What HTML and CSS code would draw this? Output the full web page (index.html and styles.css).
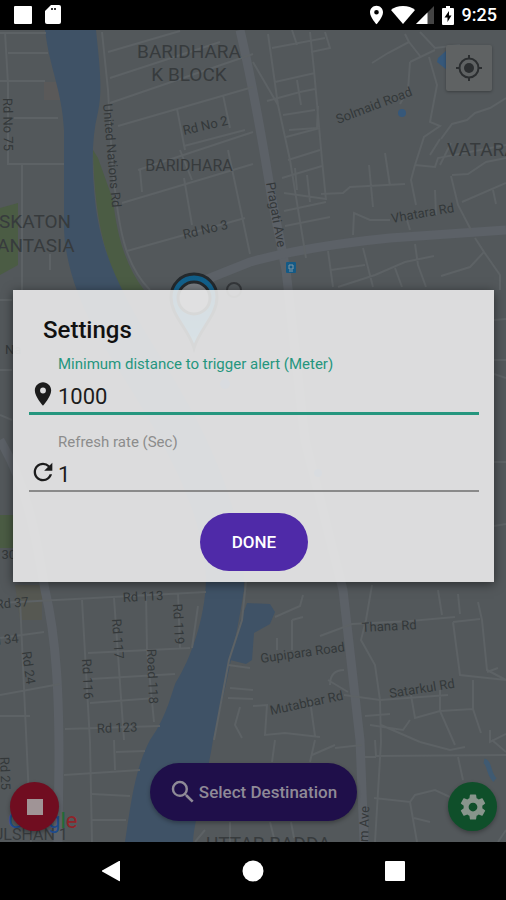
FILE: index.html
```html
<!DOCTYPE html>
<html lang="en">
<head>
    <meta charset="UTF-8">
    <meta name="viewport" content="width=device-width, initial-scale=1.0">
    <title>Location Alarm - Settings</title>
    <link rel="stylesheet" href="styles.css">
</head>
<body>

    <header class="status-bar">
        <div class="status-group">
            <svg width="18" height="18" viewBox="0 0 18 18"><rect width="18" height="18" rx="1"/></svg>
            <svg width="16" height="20" viewBox="0 0 16 20"><path d="M6 0h8a2 2 0 0 1 2 2v15a2 2 0 0 1-2 2H2a2 2 0 0 1-2-2V6z"/><path d="M6 3h2v2H6zM9 3h2v2H9z" fill="#333"/></svg>
        </div>
        <div class="status-group status-right">
            <svg width="13" height="20" viewBox="0 0 14 20"><path d="M7 0C3.1 0 0 3.1 0 7c0 5.3 7 13 7 13s7-7.700 7-13c0-3.900-3.100-7-7-7zm0 9.500a2.500 2.500 0 1 1 0-5 2.500 2.500 0 0 1 0 5z"/></svg>
            <svg class="wifi" width="24" height="18" viewBox="0 0 24 18"><path d="M12 18L0 4C3 1.500 7 0 12 0s9 1.500 12 4z"/></svg>
            <svg width="18" height="18" viewBox="0 0 18 18"><path d="M18 0v18H0z" fill="#444"/><path d="M11.500 6.500V18H0z"/></svg>
            <svg class="battery" width="12" height="19" viewBox="0 0 12 19"><path d="M4 0h4v2h3a1 1 0 0 1 1 1v15a1 1 0 0 1-1 1H1a1 1 0 0 1-1-1V3a1 1 0 0 1 1-1h3z"/><path d="M7 5L2.500 11.500H5.500V16L9.500 9.500H7z" fill="#000"/></svg>
            <span class="clock">9:25</span>
        </div>
    </header>

    <main class="screen">
        <svg class="map" viewBox="0 30 506 812" preserveAspectRatio="xMidYMid slice" aria-hidden="true">
            <defs>
                <linearGradient id="pinFill" x1="0" y1="0" x2="0" y2="1">
                    <stop offset="0" stop-color="#0f5c86"/>
                    <stop offset="1" stop-color="#2c86b4"/>
                </linearGradient>
            </defs>
            <rect y="30" width="506" height="812" fill="#53585b"/>

            <!-- parks -->
            <path d="M0 208L18 203V265L0 275z" fill="#4b5c44"/>
            <path d="M93 150C94 200 100 250 122 290H144C125 265 117 235 113 200L98 158z" fill="#4b5c44"/>
            <path d="M0 515H14V548H0z" fill="#4b5c44"/>
            <path d="M44 82H60V100H44z" fill="#5a5959"/>
            <path d="M15 585H42V620H20z" fill="#565852"/>

            <!-- water -->
            <path d="M45 30H96C99 60 103 90 98 112C91 140 92 170 95 200C100 250 120 290 150 340C200 420 245 500 244 590C236 640 223 700 213 740C205 790 194 820 193 842H125C130 810 134 770 150 740C168 715 172 690 176 682C190 660 205 620 206 580C204 500 150 420 100 340C72 290 63 250 64 220V130C62 90 50 70 45 30z" fill="#3f5266"/>
            <path d="M247 603L270 604L275 612L270 624L254 633L252 660L246 664L230 660L240 622z" fill="#3f5266"/>
            <path d="M438 58L447 50V70L437 62z" fill="#36587a"/>
            <circle cx="402" cy="113" r="4" fill="#36587a"/>
            <path d="M484 761C490 762 488 774 495 780" fill="none" stroke="#3f5a72" stroke-width="5"/>

            <!-- main roads -->
            <g fill="none" stroke="#5c6167" stroke-width="9">
                <path d="M240 30C254 90 264 150 272 200L286 270L305 440L343 590L360 740L364 842"/>
                <path d="M200 282L250 262C290 251 340 243 390 238L506 230"/>
                <path d="M0 440C30 490 38 550 45 590C57 640 59 700 59 760L58 842"/>
            </g>

            <!-- streets -->
            <g fill="none" stroke="#5d6265" stroke-width="2">
                <path d="M5 32L8 84V164H64M8 53H48M0 81H45M14 118H58M22 164V290M50 254V270M0 33H46"/>
                <path d="M102 32L108 90L112 160C118 230 125 265 150 290"/>
                <path d="M108 52L180 31M110 78L220 42M110 103L253 54M118 126L253 87M177 109L185 150M223 95L230 128M184 146L245 130"/>
                <path d="M138 170L253 132M122 203L253 164M127 251L245 218M140 170L142 192M184 178L192 225M228 150L250 254M180 150L192 180"/>
                <path d="M268 34L278 105L290 160L306 258M278 105L253 62M292 30L297 45M272 48L325 38M275 82L315 73M267 101L300 92L315 89M283 115L315 110M289 130L317 128L318 106M310 32L314 70L322 160L326 200"/>
                <path d="M311 52L330 48L325 32M297 80L301 105M286 137L320 128M288 160L320 150M282 178L322 166M295 168L297 190M307 175L310 202M284 193L326 199M284 211L326 202M285 226L330 217"/>
                <path d="M372 63L388 53L409 42L405 34M409 42L420 56M420 32L435 48L460 45M410 62L435 50M410 62L408 90L400 104M429 57L437 85L430 122L440 126L424 137L415 165M441 139L452 124L467 120L475 113L490 108L506 98M440 139L430 155M440 165L451 143"/>
                <path d="M321 194L343 193L350 187L405 184M369 165L373 207M385 153L390 186M415 165L411 180L416 205M415 165L435 167L438 158L506 145M452 175L468 174L486 162L506 158M451 176L458 205L471 230M435 190L436 215M462 202L506 183M493 190L496 204"/>
                <path d="M353 235L354 213L370 220L390 220M407 220L410 230M328 251L333 287M331 270L365 265M363 248L373 287M338 287L375 275L405 262L434 256M395 268L402 287M415 244L418 265L426 287M441 276L470 267L484 252L475 238M484 252L500 275V290"/>
                <path d="M494 320L506 319M494 360H506M494 374L506 378M494 462H506M494 526L506 524M0 300H12M0 370H12M0 415L12 420"/>
                <path d="M0 603L206 592M20 600L31 842M0 638L44 632M0 695L60 684M0 716H30M82 600L90 742L92 842M114 598L124 740M146 593L147 650L154 722M178 593L180 648M88 653L190 648M90 679L175 674M90 703L155 698M65 729L160 726M198 606L192 648"/>
                <path d="M64 775L140 770M114 740L115 770M116 752L145 751M92 794L130 796M92 820L126 820"/>
                <path d="M246 582L242 620L229 660L214 740M275 617L300 606L303 595M292 620L303 617M292 620V650M277 638V650M320 636L352 624L410 621L455 617M372 585L366 620L361 640L375 665L380 700L381 742L375 842M330 685C330 675 335 670 344 670M328 680L348 692"/>
                <path d="M438 590L442 615M458 594L460 614M478 602L482 620L487 670L506 680M453 622L480 619M453 622L460 675L506 680M487 672L498 668M253 706L267 705L265 735L285 733L320 737M310 700L315 736M381 725L420 742M411 695L415 718L440 711L473 709L481 733M440 690L440 711L455 745M473 680L473 709M365 716L390 714M344 695L380 700L448 695M410 720L403 730L370 725M490 730V742L506 734"/>
                <path d="M228 665L250 668M230 688L253 690M228 698L253 699M240 707L235 725L242 738M275 740L272 762M315 740L310 762M335 745L312 755M335 748L362 745M375 740L376 756L506 755M420 742L450 750L465 747M365 757L376 757M492 740L506 752M458 757L463 780M374 798L410 802L415 795L435 790L450 797M410 802L417 842M414 818L430 822M498 842L506 830M270 822L275 842M291 822L294 838M205 830L195 842M230 822V842"/>
            </g>

            <!-- transit stop -->
            <rect x="286" y="262" width="10" height="11" rx="1" fill="#145a86"/>
            <path d="M289 265h4v4h-4zM289 271h4" fill="none" stroke="#8297a3"/>
            <circle cx="234" cy="290" r="7" fill="none" stroke="#34373a" stroke-width="2"/>

            <!-- destination pin -->
            <path d="M194 348C188 328 171 316 171 297a23 23 0 0 1 46 0C217 316 200 328 194 348z" fill="url(#pinFill)" stroke="#24292c" stroke-width="3"/>
            <circle cx="194" cy="298" r="16" fill="#777c80" stroke="#24292c" stroke-width="3"/>
            <circle cx="225" cy="384" r="5" fill="#36587a"/>
            <circle cx="318" cy="473" r="4" fill="#36587a"/>

            <g class="area-label">
                <text x="189" y="58" text-anchor="middle">BARIDHARA</text>
                <text x="189" y="81" text-anchor="middle">K BLOCK</text>
                <text x="447" y="156">VATARA</text>
                <text x="-1" y="228">SKATON</text>
                <text x="-3" y="252">ANTASIA</text>
                <text x="206" y="850">UTTAR BADDA</text>
            </g>
            <g class="area-label small">
                <text x="189" y="171" text-anchor="middle">BARIDHARA</text>
                <text x="-18" y="840">GULSHAN 1</text>
            </g>
            <g class="street-label">
                <text transform="translate(3 98) rotate(89)">Rd No 75</text>
                <text transform="translate(103 104) rotate(85)">United Nations Rd</text>
                <text transform="translate(184 135) rotate(-13)">Rd No 2</text>
                <text transform="translate(184 239) rotate(-13)">Rd No 3</text>
                <text transform="translate(338 124) rotate(-21)">Solmaid Road</text>
                <text transform="translate(266 183) rotate(80)">Pragati Ave</text>
                <text transform="translate(392 223) rotate(-10)">Vhatara Rd</text>
                <text transform="translate(-4 609) rotate(-5)">Rd 37</text>
                <text transform="translate(-14 646) rotate(-6)">Rd 34</text>
                <text transform="translate(123 602) rotate(-3)">Rd 113</text>
                <text transform="translate(97 733) rotate(-2)">Rd 123</text>
                <text transform="translate(173 604) rotate(87)">Rd 119</text>
                <text transform="translate(112 619) rotate(86)">Rd 117</text>
                <text transform="translate(82 659) rotate(87)">Rd 116</text>
                <text transform="translate(147 649) rotate(88)">Road 118</text>
                <text transform="translate(22 652) rotate(82)">Rd 24</text>
                <text transform="translate(0 757) rotate(88)">Rd 25</text>
                <text transform="translate(362 632) rotate(-3)">Thana Rd</text>
                <text transform="translate(261 663) rotate(-8)">Gupipara Road</text>
                <text transform="translate(271 715) rotate(-12)">Mutabbar Rd</text>
                <text transform="translate(390 698) rotate(-9)">Satarkul Rd</text>
                <text transform="translate(368 842) rotate(-88)">m Ave</text>
                <text x="5" y="354">Na</text>
                <text x="-17" y="559">Rd 30</text>
            </g>
            <text class="google" x="8" y="828"><tspan fill="#1d4b8e">G</tspan><tspan fill="#8f2429">o</tspan><tspan fill="#8c6d10">o</tspan><tspan fill="#1d4b8e">g</tspan><tspan fill="#1f6b35">l</tspan><tspan fill="#8f2429">e</tspan></text>
        </svg>

        <button class="locate" type="button" aria-label="My location">
            <svg width="28" height="28" viewBox="0 0 28 28" fill="none" stroke="#2b2e30" stroke-width="2"><circle cx="14" cy="14" r="9.500"/><circle cx="14" cy="14" r="5" fill="#2b2e30" stroke="none"/><path d="M14 1v4M14 23v4M1 14h4M23 14h4"/></svg>
        </button>

        <div class="actions">
            <button class="fab stop" type="button" aria-label="Stop">
                <svg width="16" height="16" viewBox="0 0 16 16"><rect width="16" height="16" fill="#a09496"/></svg>
            </button>
            <button class="pill select-destination" type="button">
                <svg width="30" height="30" viewBox="0 0 24 24" fill="#8f8a97"><path d="M15.500 14h-.79l-.28-.27A6.471 6.471 0 0 0 16 9.500 6.500 6.500 0 1 0 9.500 16c1.610 0 3.090-.59 4.230-1.570l.27.28v.79l5 4.990L20.490 19l-4.990-5zm-6 0C7.010 14 5 11.990 5 9.500S7.010 5 9.500 5 14 7.010 14 9.500 11.990 14 9.500 14z"/></svg>
                Select Destination
            </button>
            <button class="fab open-settings" type="button" aria-label="Settings">
                <svg width="30" height="30" viewBox="0 0 24 24" fill="#88958c"><path d="M19.430 12.980c.04-.32.07-.64.07-.98s-.03-.66-.07-.98l2.110-1.650c.19-.15.24-.42.12-.64l-2-3.460c-.12-.22-.39-.3-.61-.22l-2.490 1c-.52-.4-1.080-.73-1.690-.98l-.38-2.650C14.460 2.180 14.250 2 14 2h-4c-.25 0-.46.18-.49.42l-.38 2.650c-.61.25-1.170.59-1.690.98l-2.490-1c-.23-.09-.49 0-.61.22l-2 3.460c-.13.22-.07.49.12.64l2.110 1.650c-.04.32-.07.65-.07.98s.03.66.07.98l-2.110 1.650c-.19.15-.24.42-.12.64l2 3.460c.12.22.39.3.61.22l2.490-1c.52.4 1.080.73 1.690.98l.38 2.650c.03.24.24.42.49.42h4c.25 0 .46-.18.49-.42l.38-2.650c.61-.25 1.170-.59 1.690-.98l2.490 1c.23.09.49 0 .61-.22l2-3.460c.12-.22.07-.49-.12-.64l-2.110-1.650zM12 15.500c-1.930 0-3.500-1.570-3.500-3.500s1.570-3.500 3.500-3.500 3.500 1.570 3.500 3.500-1.570 3.500-3.500 3.500z"/></svg>
            </button>
        </div>

        <form class="dialog" role="dialog" aria-labelledby="dialogTitle">
            <h2 id="dialogTitle">Settings</h2>
            <div class="field active">
                <label for="distance">Minimum distance to trigger alert (Meter)</label>
                <div class="field-row">
                    <svg width="28" height="28" viewBox="0 0 24 24" fill="#1c1c1c"><path d="M12 2C8.130 2 5 5.130 5 9c0 5.250 7 13 7 13s7-7.750 7-13c0-3.870-3.130-7-7-7zm0 9.500a2.500 2.500 0 0 1 0-5 2.500 2.500 0 0 1 0 5z"/></svg>
                    <input type="text" id="distance" inputmode="numeric" value="1000">
                </div>
            </div>
            <div class="field">
                <label for="refresh">Refresh rate (Sec)</label>
                <div class="field-row">
                    <svg width="28" height="28" viewBox="0 0 24 24" fill="#1c1c1c"><path d="M17.650 6.350A7.958 7.958 0 0 0 12 4c-4.420 0-7.990 3.580-7.990 8s3.570 8 7.990 8c3.730 0 6.840-2.550 7.730-6h-2.080A5.990 5.990 0 0 1 12 18c-3.310 0-6-2.690-6-6s2.690-6 6-6c1.660 0 3.140.69 4.220 1.780L13 11h7V4l-2.350 2.350z"/></svg>
                    <input type="text" id="refresh" inputmode="numeric" value="1">
                </div>
            </div>
            <button class="pill done" type="button">DONE</button>
        </form>
    </main>

    <nav class="nav-bar">
        <button type="button" aria-label="Back"><svg width="22" height="22" viewBox="0 0 22 22"><path d="M20 1v20a1 1 0 0 1-1 0L3 12a1 1 0 0 1 0-2L19 1z"/></svg></button>
        <button type="button" aria-label="Home"><svg width="22" height="22" viewBox="0 0 22 22"><circle cx="11" cy="11" r="10.500"/></svg></button>
        <button type="button" aria-label="Recent apps"><svg width="22" height="22" viewBox="0 0 22 22"><rect x="1" y="1" width="20" height="20" rx="1"/></svg></button>
    </nav>

</body>
</html>
```
FILE: styles.css
```css
/* General Styling */
* {
    margin: 0;
    padding: 0;
    box-sizing: border-box;
}
body {
    font-family: Roboto, "Liberation Sans", sans-serif;
    background: #000;
    min-height: 100vh;
    display: flex;
    flex-direction: column;
}
svg {
    display: block;
    flex-shrink: 0;
}
button {
    border: none;
    cursor: pointer;
    font-family: inherit;
    display: flex;
    align-items: center;
    justify-content: center;
}
/* Status bar */
.status-bar {
    height: 30px;
    padding: 0 9px 0 14px;
    display: flex;
    justify-content: space-between;
    align-items: center;
    color: white;
}
.status-bar svg {
    fill: white;
}
.status-group {
    display: flex;
    align-items: center;
    gap: 13px;
}
.status-right {
    gap: 8px;
}
.wifi {
    margin-right: -7px;
}
.clock {
    font-size: 18px;
    font-weight: 500;
    line-height: 30px;
}
/* Map */
.screen {
    flex: 1;
    position: relative;
    overflow: hidden;
    display: flex;
    align-items: center;
    padding: 0 12px 0 13px;
}
.map {
    position: absolute;
    top: 0;
    left: 0;
    width: 100%;
    height: 100%;
}
.area-label {
    font-size: 19px;
    fill: #373b3d;
}
.area-label.small {
    font-size: 16px;
}
.street-label {
    font-size: 13px;
    fill: #34383a;
}
.google {
    font-size: 22px;
}
/* Buttons over the map */
.locate {
    position: absolute;
    top: 15px;
    right: 14px;
    width: 46px;
    height: 46px;
    border-radius: 2px;
    background: #5f6263;
    box-shadow: 0 1px 3px rgba(0, 0, 0, 0.3);
}
.actions {
    position: absolute;
    left: 0;
    right: 0;
    bottom: 0;
    padding: 0 9px 11px 10px;
    display: flex;
    justify-content: space-between;
    align-items: flex-end;
}
.fab {
    width: 49px;
    height: 49px;
    border-radius: 50%;
    box-shadow: 0 2px 4px rgba(0, 0, 0, 0.3);
}
.stop {
    background: #700d20;
}
.open-settings {
    background: #0f4f2a;
}
.pill {
    height: 58px;
    border-radius: 29px;
    font-size: 17px;
    font-weight: 500;
}
.select-destination {
    margin-bottom: 10px;
    padding: 0 20px 0 18px;
    gap: 1px;
    color: #8f8a97;
    background: #1f0f4a;
    box-shadow: 0 2px 4px rgba(0, 0, 0, 0.3);
}
/* Settings dialog */
.dialog {
    position: relative;
    flex: 1;
    padding: 24px 15px 11px 16px;
    background: rgba(235, 235, 235, 0.9);
    box-shadow: 0 2px 10px rgba(0, 0, 0, 0.5);
}
.dialog h2 {
    margin-bottom: 8px;
    padding-left: 14px;
    font-size: 24px;
    font-weight: 500;
    line-height: 32px;
    color: #111;
}
.field {
    margin-bottom: 17px;
}
.field label {
    display: block;
    margin-bottom: 2px;
    padding-left: 29px;
    font-size: 15px;
    line-height: 20px;
    color: #8c8c8c;
}
.field-row {
    display: flex;
    align-items: center;
    gap: 1px;
    border-bottom: 2px solid #8a8a8a;
}
.field.active label {
    color: #25967e;
}
.field.active .field-row {
    border-bottom: 3px solid #25967e;
}
.field input {
    flex: 1;
    min-width: 0;
    height: 36px;
    padding-top: 4px;
    border: none;
    outline: none;
    background: transparent;
    font-family: inherit;
    font-size: 22px;
    color: #1c1c1c;
}
.done {
    width: 108px;
    margin: 21px auto 0;
    color: white;
    background: #4f2aa8;
}
/* Navigation bar */
.nav-bar {
    height: 58px;
    padding: 0 8%;
    display: grid;
    grid-template-columns: repeat(3, 1fr);
}
.nav-bar button {
    background: transparent;
}
.nav-bar svg {
    fill: white;
}
```
